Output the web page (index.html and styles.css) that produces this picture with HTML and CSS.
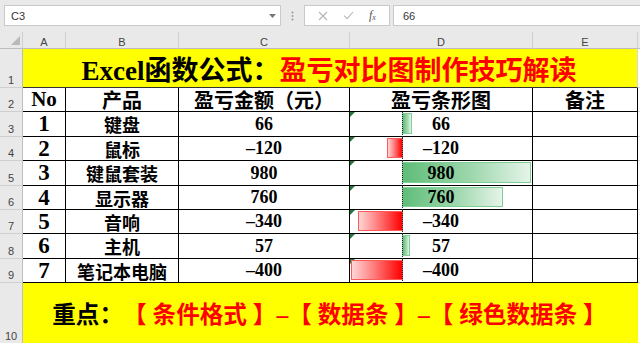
FILE: index.html
```html
<!DOCTYPE html>
<html lang="zh">
<head>
<meta charset="utf-8">
<title>Excel 盈亏对比图</title>
<link rel="stylesheet" href="styles.css">
</head>
<body>
<div class="app">
  <div class="fbar">
    <div class="namebox">
      <span class="nb-text">C3</span>
      <svg class="nb-arrow" width="7" height="4" viewBox="0 0 7 4"><path d="M0 0H7L3.5 4Z" fill="#777"/></svg>
    </div>
    <div class="dots">
      <svg width="3" height="10" viewBox="0 0 3 10"><circle cx="1.5" cy="1.5" r="1" fill="#999"/><circle cx="1.5" cy="5" r="1" fill="#999"/><circle cx="1.5" cy="8.5" r="1" fill="#999"/></svg>
    </div>
    <div class="fbtns">
      <svg class="ico" width="10" height="10" viewBox="0 0 10 10"><path d="M1 1L9 9M9 1L1 9" stroke="#b4b4b4" stroke-width="1.1" fill="none"/></svg>
      <svg class="ico" width="11" height="9" viewBox="0 0 11 9"><path d="M1 4.5L4 7.8L10 1" stroke="#b4b4b4" stroke-width="1.1" fill="none"/></svg>
      <span class="fx">f<sub>x</sub></span>
    </div>
    <div class="finput">66</div>
  </div>

  <div class="sheet">
    <div class="corner"><svg width="9" height="9" viewBox="0 0 9 9"><path d="M9 0V9H0Z" fill="#b9b9b9"/></svg></div>
    <div class="ch">A</div>
    <div class="ch">B</div>
    <div class="ch">C</div>
    <div class="ch">D</div>
    <div class="ch">E</div>
    <div class="ch rest-h"></div>

    <div class="rh">1</div>
    <div class="title"><span class="blk">Excel函数公式：</span><span class="red">盈亏对比图制作技巧解读</span></div>
    <div class="rest"></div>

    <div class="rh">2</div>
    <div class="c th no">No</div>
    <div class="c th">产品</div>
    <div class="c th">盈亏金额（元）</div>
    <div class="c th">盈亏条形图</div>
    <div class="c th">备注</div>
    <div class="rest"></div>

    <div class="rh">3</div>
    <div class="c num">1</div>
    <div class="c name">键盘</div>
    <div class="c val">66</div>
    <div class="c barcell"><span class="tri"></span><span class="bar pos" style="width:10px"></span><span class="axis"></span><span class="bv">66</span></div>
    <div class="c"></div>
    <div class="rest"></div>

    <div class="rh">4</div>
    <div class="c num">2</div>
    <div class="c name">鼠标</div>
    <div class="c val">–120</div>
    <div class="c barcell"><span class="tri"></span><span class="bar neg" style="width:16px"></span><span class="axis"></span><span class="bv">–120</span></div>
    <div class="c"></div>
    <div class="rest"></div>

    <div class="rh">5</div>
    <div class="c num">3</div>
    <div class="c name">键鼠套装</div>
    <div class="c val">980</div>
    <div class="c barcell"><span class="tri"></span><span class="bar pos" style="width:129px"></span><span class="axis"></span><span class="bv">980</span></div>
    <div class="c"></div>
    <div class="rest"></div>

    <div class="rh">6</div>
    <div class="c num">4</div>
    <div class="c name">显示器</div>
    <div class="c val">760</div>
    <div class="c barcell"><span class="tri"></span><span class="bar pos" style="width:101px"></span><span class="axis"></span><span class="bv">760</span></div>
    <div class="c"></div>
    <div class="rest"></div>

    <div class="rh">7</div>
    <div class="c num">5</div>
    <div class="c name">音响</div>
    <div class="c val">–340</div>
    <div class="c barcell"><span class="tri"></span><span class="bar neg" style="width:45px"></span><span class="axis"></span><span class="bv">–340</span></div>
    <div class="c"></div>
    <div class="rest"></div>

    <div class="rh">8</div>
    <div class="c num">6</div>
    <div class="c name">主机</div>
    <div class="c val">57</div>
    <div class="c barcell"><span class="tri"></span><span class="bar pos" style="width:8px"></span><span class="axis"></span><span class="bv">57</span></div>
    <div class="c"></div>
    <div class="rest"></div>

    <div class="rh">9</div>
    <div class="c num">7</div>
    <div class="c name">笔记本电脑</div>
    <div class="c val">–400</div>
    <div class="c barcell"><span class="tri"></span><span class="bar neg" style="width:52px"></span><span class="axis"></span><span class="bv">–400</span></div>
    <div class="c"></div>
    <div class="rest"></div>

    <div class="rh">10</div>
    <div class="foot"><span class="blk">重点：</span><span class="red">【 条件格式 】–【 数据条 】–【 绿色数据条 】</span></div>
    <div class="rest"></div>
  </div>
</div>
</body>
</html>
```

FILE: styles.css
```css
* { box-sizing: border-box; }
html, body { margin: 0; padding: 0; }
body {
  width: 640px;
  height: 343px;
  overflow: hidden;
  background: #ffffff;
  font-family: "Liberation Sans", "Noto Sans CJK SC", sans-serif;
}
.app { width: 640px; height: 343px; overflow: hidden; }

/* formula bar */
.fbar {
  height: 32px;
  background: #e9e9e9;
  display: flex;
  align-items: flex-start;
  padding-top: 5px;
  padding-left: 4px;
}
.namebox {
  width: 277px;
  height: 21px;
  background: #fff;
  border: 1px solid #c9c9c9;
  display: flex;
  align-items: center;
  justify-content: space-between;
  padding: 0 4px 0 6px;
  font-size: 11px;
  color: #333;
}
.nb-arrow { margin-top: 1px; }
.dots {
  width: 23px;
  height: 21px;
  display: flex;
  align-items: center;
  justify-content: center;
}
.fbtns {
  width: 86px;
  height: 21px;
  background: #fff;
  border: 1px solid #c9c9c9;
  display: flex;
  align-items: center;
  gap: 15px;
  padding-left: 13px;
}
.fx {
  font-family: "Liberation Serif", serif;
  font-style: italic;
  font-size: 12px;
  color: #555;
  line-height: 1;
}
.fx sub { font-size: 8px; vertical-align: -1px; }
.finput {
  flex: 1;
  margin-left: 3px;
  height: 21px;
  background: #fff;
  border: 1px solid #c9c9c9;
  border-right: none;
  font-size: 11px;
  color: #333;
  display: flex;
  align-items: center;
  padding-left: 9px;
}

/* sheet grid */
.sheet {
  display: grid;
  grid-template-columns: 23px 43px 113px 171px 183px 105px 2px;
  grid-template-rows: 17px 39px 24px 25px 24px 25px 24px 24px 25px 24px 61px;
}
.corner, .ch {
  background: #e9e9e9;
  border-bottom: 1px solid #bdbdbd;
}
.corner {
  border-right: 1px solid #cfcfcf;
  display: flex;
  align-items: flex-end;
  justify-content: flex-end;
  padding: 0 2px 3px 0;
}
.ch {
  border-right: 1px solid #cfcfcf;
  font-size: 11px;
  color: #444;
  display: flex;
  align-items: center;
  justify-content: center;
  padding-top: 4px;
}
.rest-h { border-right: none; }
.rh {
  background: #e9e9e9;
  border-right: 1px solid #bdbdbd;
  border-bottom: 1px solid #cfcfcf;
  font-size: 11px;
  color: #444;
  display: flex;
  align-items: flex-end;
  justify-content: center;
  line-height: 13px;
}
.rest { border-bottom: 1px solid #d9d9d9; }

.title, .foot {
  grid-column: 2 / 7;
  background: #ffff00;
  display: flex;
  align-items: center;
  justify-content: center;
  font-family: "Liberation Serif", "Noto Sans CJK SC", serif;
  font-weight: 700;
  white-space: nowrap;
}
.title {
  font-size: 27px;
  border-bottom: 1px solid #333;
  border-right: 1px solid #d9d9d9;
  padding-right: 2px;
}
.foot {
  font-size: 23.6px;
  padding-right: 2px;
  padding-bottom: 2px;
}
.blk { color: #000; }
.red { color: #ff0000; }

.c {
  border-right: 1px solid #000;
  border-bottom: 1px solid #000;
  display: flex;
  align-items: center;
  justify-content: center;
  font-family: "Liberation Serif", "Noto Sans CJK SC", serif;
  font-weight: 700;
  color: #000;
  white-space: nowrap;
}
.th { font-size: 20px; }
.th.no { font-size: 21px; }
.num { font-size: 23px; }
.name { font-size: 18px; }
.val { font-size: 18px; }

.barcell { position: relative; font-size: 18px; }
.tri {
  position: absolute;
  left: 0;
  top: 0;
  width: 0;
  height: 0;
  border-top: 5px solid #1f7a3a;
  border-right: 5px solid transparent;
}
.axis {
  position: absolute;
  left: 52px;
  top: 0;
  bottom: -1px;
  border-left: 1px dotted #222;
}
.bar {
  position: absolute;
  top: 1px;
  bottom: 2px;
}
.bar.pos {
  left: 52px;
  background: linear-gradient(to right, #5fbd79, #9fd8ae 55%, #e6f4e9);
  border: 1px solid #7fcf95;
}
.bar.neg {
  right: calc(100% - 53px);
  background: linear-gradient(to left, #ff0000, #ff7a7a 55%, #ffd6d6);
  border: 1px solid #ff5a5a;
}
.bv { position: relative; }
```
